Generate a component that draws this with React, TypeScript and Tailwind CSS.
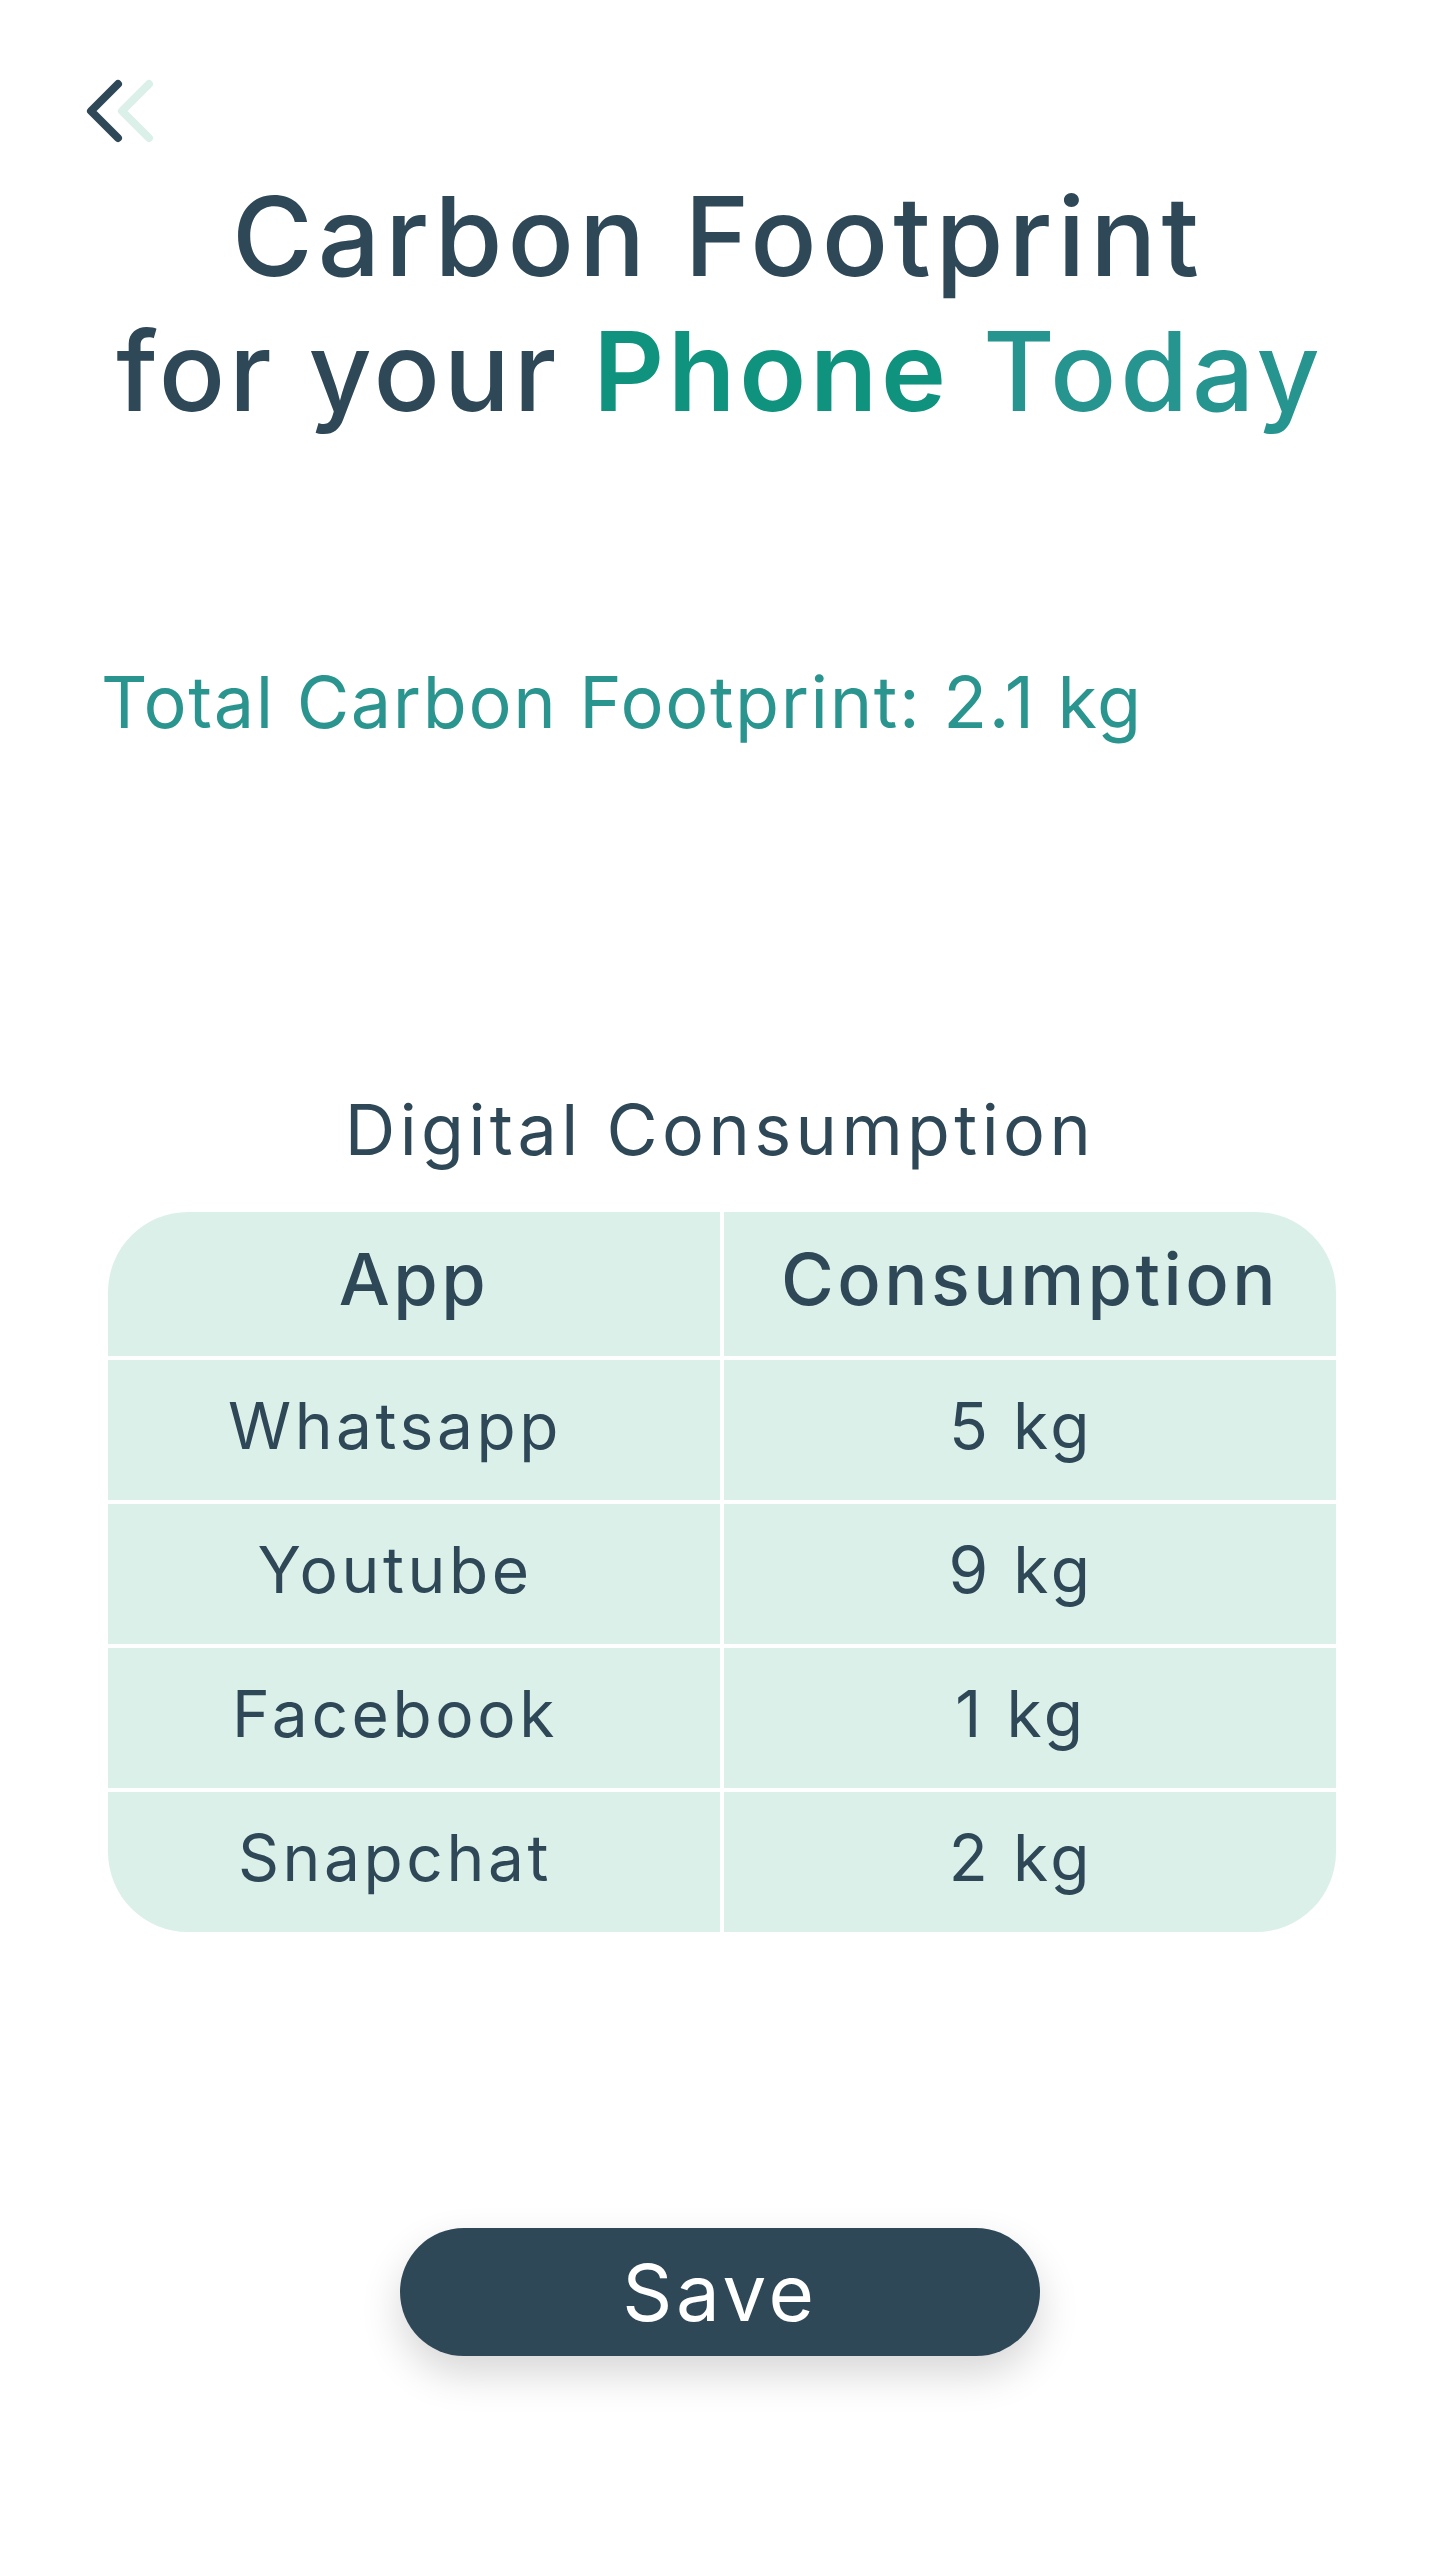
import React from "react";

const rows = [
  { app: "Whatsapp", value: "5 kg" },
  { app: "Youtube", value: "9 kg" },
  { app: "Facebook", value: "1 kg" },
  { app: "Snapchat", value: "2 kg" },
];

export default function App() {
  return (
    <div
      className="w-[1440px] min-h-[2560px] bg-white flex flex-col text-[#2f4858]"
      style={{ fontFamily: "Inter, 'Open Sans', sans-serif" }}
    >
      <div className="pt-[75px] pl-[80px] h-[169px]">
        <svg width="80" height="75" viewBox="80 75 80 75" fill="none">
          <path d="M149 84 L122 111 L149 138" stroke="#dbf0e9" strokeWidth="8" strokeLinecap="round" strokeLinejoin="round" />
          <path d="M118 84 L91 111 L118 138" stroke="#2f4858" strokeWidth="8" strokeLinecap="round" strokeLinejoin="round" />
        </svg>
      </div>

      <h1 className="text-center text-[110px] leading-[135px] font-medium">
        <div className="tracking-[5px] pr-[4px]">Carbon Footprint</div>
        <div className="tracking-[3.8px]">
          for your <span className="font-semibold text-[#10937e]">Phone</span>{" "}
          <span className="text-[#26948f]">Today</span>
        </div>
      </h1>

      <p className="mt-[220px] pl-[101px] text-[72px] leading-[86px] tracking-[1.6px] text-[#2a948f]">
        Total Carbon Footprint: 2.1 kg
      </p>

      <p className="mt-[343px] text-center text-[70px] leading-[84px] tracking-[4.4px]">Digital Consumption</p>

      <div className="mt-[40px] mx-[108px] w-[1228px] rounded-[80px] overflow-hidden grid grid-cols-2 gap-[4px] bg-white">
        <div className="h-[144px] bg-[#dbf0e9] flex items-center justify-center text-[72px] font-medium tracking-[3.5px] pb-[10px]">
          App
        </div>
        <div className="h-[144px] bg-[#dbf0e9] flex items-center justify-center text-[72px] font-medium tracking-[3.5px] pb-[10px]">
          Consumption
        </div>
        {rows.map((r) => (
          <React.Fragment key={r.app}>
            <div className="h-[140px] bg-[#dbf0e9] flex items-center justify-center text-[64px] tracking-[3.6px] pr-[38px] pb-[8px]">
              {r.app}
            </div>
            <div className="h-[140px] bg-[#dbf0e9] flex items-center justify-center text-[64px] tracking-[3.6px] pr-[18px] pb-[8px]">
              {r.value}
            </div>
          </React.Fragment>
        ))}
      </div>

      <div className="mt-[296px] flex justify-center">
        <button className="w-[640px] h-[128px] rounded-full bg-[#2f4858] text-white text-[78px] tracking-[3.7px] shadow-[0_18px_40px_rgba(0,0,0,0.16)] flex items-center justify-center">
          Save
        </button>
      </div>
    </div>
  );
}
